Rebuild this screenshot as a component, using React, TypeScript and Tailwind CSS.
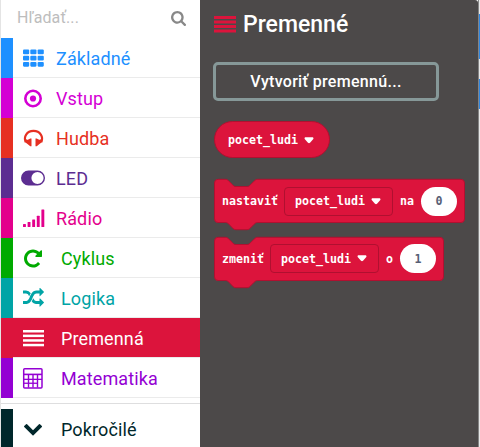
import type { ReactNode } from "react";

const RANDOM =
  "M666 481q-60 92-137 273-22-45-37-72.5t-40.5-63.5-51-56.5-63-35-81.5-14.5h-224q-14 0-23-9t-9-23v-192q0-14 9-23t23-9h224q250 0 410 225zm1126 799q0 14-9 23l-320 320q-9 9-23 9-13 0-22.5-9.5t-9.5-22.5v-192q-32 0-85 .5t-81 1-73-1-71-5-64-10.5-63-18.5-58-28.5-59-40-55-53.5-56-69.5q59-93 136-273 22 45 37 72.5t40.5 63.5 51 56.5 63 35 81.5 14.5h256v-192q0-14 9-23t23-9q12 0 24 10l319 319q9 9 9 23zm0-896q0 14-9 23l-320 320q-9 9-23 9-13 0-22.5-9.5t-9.5-22.5v-192h-256q-48 0-87 15t-69 45-51 61.5-45 77.5q-32 62-78 171-29 66-49.5 111t-54 105-64 100-74 83-90 68.5-106.5 42-128 16.5h-224q-14 0-23-9t-9-23v-192q0-14 9-23t23-9h224q48 0 87-15t69-45 51-61.5 45-77.5q32-62 78-171 29-66 49.5-111t54-105 64-100 74-83 90-68.5 106.5-42 128-16.5h256v-192q0-14 9-23t23-9q12 0 24 10l319 319q9 9 9 23z";
const REPEAT =
  "M1664 256v448q0 26-19 45t-45 19h-448q-42 0-59-40-17-39 14-69l138-138q-148-137-349-137-104 0-198.5 40.5t-163.5 109.5-109.5 163.5-40.5 198.5 40.5 198.5 109.5 163.5 163.5 109.5 198.5 40.5q119 0 225-52t179-147q7-10 23-12 15 0 25 9l137 138q9 8 9.5 20.5t-7.5 22.5q-109 132-264 204.5t-327 72.5q-156 0-298-61t-245-164-164-245-61-298 61-298 164-245 245-164 298-61q147 0 284.5 55.5t244.5 156.5l130-129q29-31 70-14 39 17 39 59z";
const SEARCH =
  "M1216 832q0-185-131.5-316.5t-316.5-131.5-316.5 131.5-131.5 316.5 131.5 316.5 316.5 131.5 316.5-131.5 131.5-316.5zm512 832q0 52-38 90t-90 38q-54 0-90-38l-343-342q-179 124-399 124-143 0-273.5-55.5t-225-150-150-225-55.5-273.5 55.5-273.5 150-225 225-150 273.5-55.5 273.5 55.5 225 150 150 225 55.5 273.5q0 220-124 399l343 343q37 37 37 90z";
const CHEVRON =
  "M1683 808l-742 741q-19 19-45 19t-45-19l-742-741q-19-19-19-45.5t19-45.5l166-165q19-19 45-19t45 19l531 531 531-531q19-19 45-19t45 19l166 165q19 19 19 45.5t-19 45.5z";

// Every category icon is drawn in a 26x26 box.
function Icon({ children }: { children: ReactNode }) {
  return (
    <svg viewBox="0 0 26 26" className="size-[26px] shrink-0 fill-current">
      {children}
    </svg>
  );
}

const grid = (
  <Icon>
    {[4.5, 10.7, 16.9].map((y) =>
      [3, 10.3, 17.6].map((x) => <rect key={x + "-" + y} x={x} y={y} width="6.2" height="4.8" rx="1.1" />),
    )}
  </Icon>
);
const target = (
  <Icon>
    <circle cx="13" cy="13.5" r="7.7" fill="none" stroke="currentColor" strokeWidth="2.6" />
    <circle cx="13" cy="13.5" r="3.1" />
  </Icon>
);
const headphones = (
  <Icon>
    <path
      d="M5.8 17.2C3.2 12 6.8 5.9 13.5 5.9S23.8 12 21.2 17.2"
      fill="none"
      stroke="currentColor"
      strokeWidth="2.2"
    />
    <path d="M4.4 16.4L10.3 13.6h1.2v7.6h-1.2zM22.6 16.4L16.7 13.6h-1.2v7.6h1.2z" />
    <path d="M4.2 13.5l2.4 4.8 2.5-2.8zM22.8 13.5l-2.4 4.8-2.5-2.8z" />
  </Icon>
);
const toggle = (
  <Icon>
    <path
      fillRule="evenodd"
      d="M8.5 5.5h9a7.5 7.5 0 0 1 0 15h-9a7.5 7.5 0 0 1 0-15zM17.5 6.9a6.1 6.1 0 1 0 0 12.2a6.1 6.1 0 0 0 0-12.2z"
    />
  </Icon>
);
const signal = (
  <Icon>
    {[3, 5, 7.5, 11.3, 17.5].map((h, i) => (
      <rect key={h} x={3 + i * 4.6} y={22 - h} width="2.9" height={h} rx="0.5" />
    ))}
  </Icon>
);
const repeat = (
  <Icon>
    <path transform="translate(2.5 3) scale(0.01172)" d={REPEAT} />
  </Icon>
);
const shuffle = (
  <Icon>
    <path transform="translate(3 2.5) scale(0.01172)" d={RANDOM} />
  </Icon>
);
const lines = (
  <Icon>
    {[5, 9.6, 14.2, 18.8].map((y) => (
      <rect key={y} x="3" y={y} width="21" height="2.5" />
    ))}
  </Icon>
);
const calculator = (
  <Icon>
    <rect x="3.7" y="3.7" width="18.3" height="19.2" rx="1" fill="none" stroke="currentColor" strokeWidth="1.5" />
    <path d="M3.5 8.6h18.5v1.6H3.5z" />
    {[13.7, 17.6].map((y) => (
      <path key={y} d={`M4 ${y}h${y > 15 ? 13.5 : 18}v1.3H4z`} />
    ))}
    {[7.8, 12.3, 16.8].map((x) => (
      <path key={x} d={`M${x} 9.5h1.4v13h-1.4z`} />
    ))}
  </Icon>
);
const chevron = (
  <Icon>
    <path transform="translate(3 2) scale(0.0112)" d={CHEVRON} />
  </Icon>
);

const categories = [
  { name: "Základné", icon: grid, bar: "bg-[#1e90ff]", text: "text-[#1e90ff]", gap: "ml-[10px]" },
  { name: "Vstup", icon: target, bar: "bg-[#d400d4]", text: "text-[#d400d4]", gap: "ml-[10px]" },
  { name: "Hudba", icon: headphones, bar: "bg-[#e63022]", text: "text-[#e63022]", gap: "ml-[10px]" },
  { name: "LED", icon: toggle, bar: "bg-[#5c2d91]", text: "text-[#5c2d91]", gap: "ml-[10px]" },
  { name: "Rádio", icon: signal, bar: "bg-[#e3008c]", text: "text-[#e3008c]", gap: "ml-[10px]" },
  { name: "Cyklus", icon: repeat, bar: "bg-[#00aa00]", text: "text-[#00aa00]", gap: "ml-[15px]" },
  { name: "Logika", icon: shuffle, bar: "bg-[#00a4a6]", text: "text-[#00a4a6]", gap: "ml-[15px]" },
  { name: "Premenná", icon: lines, bar: "bg-[#dc143c]", text: "bg-[#dc143c] text-white", gap: "ml-[15px]" },
  { name: "Matematika", icon: calculator, bar: "bg-[#9400d3]", text: "text-[#9400d3]", gap: "ml-[15px]" },
];

function Row({ name, icon, bar, text, gap }: (typeof categories)[number]) {
  return (
    <div className="flex h-10 shrink-0">
      <div className={`w-3 shrink-0 ${bar}`} />
      <div className={`flex flex-1 items-center border-b border-[#ebebeb] pl-[7px] text-[18px] tracking-[0.12px] ${text}`}>
        {icon}
        <span className={`mt-[3px] leading-none ${gap}`}>{name}</span>
      </div>
    </div>
  );
}

function Arrow({ className }: { className: string }) {
  return (
    <svg viewBox="0 0 10 7" className={`h-[7px] w-[10px] shrink-0 ${className}`}>
      <path d="M1.2 .3h7.6q1.2 .5 .5 1.6L6 5.8q-1 .9-2 0L.7 1.9Q0 .8 1.2 .3z" fill="#fff" />
    </svg>
  );
}

// Block captions are set slightly taller than the font's natural proportions.
function Caption({ children, className = "" }: { children: ReactNode; className?: string }) {
  return <span className={`mt-[2px] inline-block shrink-0 scale-y-110 ${className}`}>{children}</span>;
}

function Field() {
  return (
    <div className="flex h-[29px] w-[109px] shrink-0 items-center rounded-[4px] border border-[#b01030] pl-[10px]">
      <Caption className="w-[70px]">pocet_ludi</Caption>
      <Arrow className="ml-[6px]" />
    </div>
  );
}

const NOTCH_EDGE = "c2 0 3 1 4 2l4 4c1 1 2 2 4 2h12c2 0 3-1 4-2l4-4c1-1 2-2 4-2";
const TAB_EDGE = "c-2 0-3 1-4 2l-4 4c-1 1-2 2-4 2h-12c-2 0-3-1-4-2l-4-4c-1-1-2-2-4-2";

function Block({ label, joiner, value, width }: { label: string; joiner: string; value: string; width: number }) {
  const w = width / 0.9;
  return (
    <div className="relative h-[57.5px]">
      <svg className="absolute inset-0 h-[57px] w-[256px] overflow-visible">
        <path
          transform="translate(.5 .3) scale(.9)"
          d={`M0 4a4 4 0 0 1 4-4h8${NOTCH_EDGE}H${w - 4}a4 4 0 0 1 4 4v40a4 4 0 0 1-4 4H48${TAB_EDGE}H4a4 4 0 0 1-4-4z`}
          fill="#dc143c"
          stroke="#b01030"
          strokeWidth="1.1"
        />
      </svg>
      <div className="relative flex h-11 items-center pl-2">
        <Caption>{label}</Caption>
        <div className="ml-[6px]">
          <Field />
        </div>
        <Caption className="ml-[7px]">{joiner}</Caption>
        <span className="ml-[7px] flex h-[29px] w-9 shrink-0 items-center justify-center rounded-full bg-white text-[#575e75]">
          <Caption>{value}</Caption>
        </span>
      </div>
    </div>
  );
}

export default function App() {
  return (
    <div className="flex h-[447px] w-[480px] overflow-hidden bg-white font-['Roboto',sans-serif]">
      <aside className="flex w-[200px] shrink-0 flex-col border-l border-[#e4e4e4]">
        <div className="flex h-[38px] shrink-0 items-center justify-between pr-[14px] pl-4">
          <span className="mb-[2px] text-[16px] tracking-[0.1px] text-[#bdbdbd]">Hľadať...</span>
          <svg viewBox="64 128 1664 1664" className="mb-[2px] size-[15px] fill-[#888888]">
            <path d={SEARCH} />
          </svg>
        </div>
        {categories.map((c) => (
          <Row key={c.name} {...c} />
        ))}
        <div className="mt-[5px] h-px shrink-0 bg-[#dededf]" />
        <div className="mt-[5px] flex h-10 shrink-0">
          <div className="w-3 bg-[#00272b]" />
          <div className="flex items-center pl-[7px] text-[18px] tracking-[0.12px] text-[#00272b]">
            {chevron}
            <span className="mt-[2px] ml-[15px] leading-none">Pokročilé</span>
          </div>
        </div>
      </aside>
      <main className="flex w-[278px] shrink-0 flex-col rounded-tr-[3px] bg-[#4c4949] pl-[14px] text-white">
        <div className="mt-[9px] flex h-[30px] items-center">
          <svg viewBox="0 0 22 18" className="h-[18px] w-[22px] fill-[#dc143c]">
            <path d="M0 1h22v3H0zM0 5.5h22v3H0zM0 10h22v3H0zM0 14.5h22v3H0z" />
          </svg>
          <span className="ml-[7px] text-[23px] leading-none font-medium">Premenné</span>
        </div>
        <div className="mt-[23px] -ml-px flex h-[39px] w-[226px] shrink-0 items-center justify-center rounded-[5px] border-[3px] border-[#869898] text-[16px] font-medium tracking-[0.3px]">
          Vytvoriť premennú...
        </div>
        <div className="mt-5 font-['DejaVu_Sans_Mono',monospace] text-[11.63px] font-bold">
          <div className="flex h-[37px] w-[116px] items-center rounded-full border border-[#b01030] bg-[#dc143c] pl-[13px]">
            <Caption className="w-[70px]">pocet_ludi</Caption>
            <Arrow className="mt-[2px] ml-[6px]" />
          </div>
          <div className="mt-[21px]">
            <Block label="nastaviť" joiner="na" value="0" width={250} />
            <Block label="zmeniť" joiner="o" value="1" width={229} />
          </div>
        </div>
      </main>
      <div className="flex w-[2px] flex-col border-l border-[#858585] bg-[#e8e8e8]">
        <div className="mt-[14px] h-[45px] bg-[#2f86e0]" />
        <div className="mt-5 h-[30px] bg-[#2f86e0]" />
      </div>
    </div>
  );
}
